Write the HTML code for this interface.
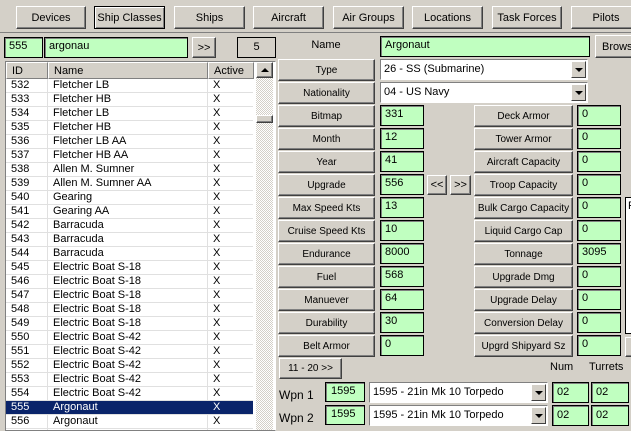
<!DOCTYPE html>
<html><head><meta charset="utf-8"><style>
*{box-sizing:border-box;margin:0;padding:0}
body{width:631px;height:427px;overflow:hidden;background:#d4d0c8;font-family:"Liberation Sans",sans-serif;font-size:11px;color:#000;position:relative}
.a{position:absolute}
.btn{position:absolute;background:#d4d0c8;border:1px solid;border-color:#fff #404040 #404040 #fff;box-shadow:inset -1px -1px 0 #808080;text-align:center;display:flex;align-items:center;justify-content:center;font-size:11px;white-space:nowrap}
.s{font-size:10px}
.sel{border:1px solid #000;box-shadow:inset 1px 1px 0 #fff,inset -1px -1px 0 #808080}
.f{position:absolute;background:#c0ffc0;border:1px solid #000;box-shadow:inset 1px 1px 0 #808080;padding:2px 0 0 4px;height:21px}
.w{position:absolute;background:#fff;border:1px solid #808080;border-right-color:#fff;border-bottom-color:#fff;padding:3px 0 0 3px;height:21px}
.dd{position:absolute;right:1px;top:1px;width:15px;height:17px;background:#d4d0c8;border:1px solid;border-color:#fff #404040 #404040 #fff}
.dd:after{content:"";position:absolute;left:3px;top:6px;border-left:4px solid transparent;border-right:4px solid transparent;border-top:4px solid #000}
#list{position:absolute;left:5px;top:61px;width:271px;height:370px;background:#fff;border:1px solid #808080;border-right-color:#fff;overflow:hidden}
.hd{position:absolute;top:0;height:17px;background:#d4d0c8;border:1px solid;border-color:#fff #808080 #808080 #fff;padding:2px 0 0 5px}
.r{position:absolute;left:0;width:247px;height:14px;border-bottom:1px solid #e0e0e0}
.r span{position:absolute;top:0}
.r span:nth-child(1){left:5px}.r span:nth-child(2){left:47px}.r span:nth-child(3){left:207px}
.vl{position:absolute;top:17px;bottom:0;width:1px;background:#e0e0e0}
</style></head><body>
<div class="a" style="left:0;top:32px;width:631px;height:1px;background:#808080"></div>
<div class="btn" style="left:16px;top:6px;width:70px;height:23px">Devices</div>
<div class="btn sel" style="left:94px;top:6px;width:71px;height:23px">Ship Classes</div>
<div class="btn" style="left:174px;top:6px;width:71px;height:23px">Ships</div>
<div class="btn" style="left:253px;top:6px;width:71px;height:23px">Aircraft</div>
<div class="btn" style="left:333px;top:6px;width:71px;height:23px">Air Groups</div>
<div class="btn" style="left:412px;top:6px;width:71px;height:23px">Locations</div>
<div class="btn" style="left:492px;top:6px;width:70px;height:23px">Task Forces</div>
<div class="btn" style="left:571px;top:6px;width:70px;height:23px">Pilots</div>

<div class="f" style="left:4px;top:37px;width:39px">555</div>
<div class="f" style="left:44px;top:37px;width:144px">argonau</div>
<div class="btn" style="left:192px;top:37px;width:24px;height:21px">&gt;&gt;</div>
<div class="a" style="left:237px;top:37px;width:39px;height:21px;border:1px solid #000;text-align:center;padding-top:3px">5</div>

<div id="list">
<div class="hd" style="left:0;width:42px">ID</div>
<div class="hd" style="left:42px;width:160px">Name</div>
<div class="hd" style="left:202px;width:46px">Active</div>
<div class="a" style="left:250px;top:0;width:17px;height:370px;background:repeating-conic-gradient(#fff 0 25%,#d4d0c8 0 50%) 0 0/2px 2px"></div>
<div class="btn" style="left:250px;top:0;width:17px;height:16px"><div style="border-left:4px solid transparent;border-right:4px solid transparent;border-bottom:4px solid #000"></div></div>
<div class="btn" style="left:250px;top:53px;width:17px;height:8px"></div>
<div class="vl" style="left:41px"></div><div class="vl" style="left:201px"></div>
<div class="r" style="top:17px"><span>532</span><span>Fletcher LB</span><span>X</span></div>
<div class="r" style="top:31px"><span>533</span><span>Fletcher HB</span><span>X</span></div>
<div class="r" style="top:45px"><span>534</span><span>Fletcher LB</span><span>X</span></div>
<div class="r" style="top:59px"><span>535</span><span>Fletcher HB</span><span>X</span></div>
<div class="r" style="top:73px"><span>536</span><span>Fletcher LB AA</span><span>X</span></div>
<div class="r" style="top:87px"><span>537</span><span>Fletcher HB AA</span><span>X</span></div>
<div class="r" style="top:101px"><span>538</span><span>Allen M. Sumner</span><span>X</span></div>
<div class="r" style="top:115px"><span>539</span><span>Allen M. Sumner AA</span><span>X</span></div>
<div class="r" style="top:129px"><span>540</span><span>Gearing</span><span>X</span></div>
<div class="r" style="top:143px"><span>541</span><span>Gearing AA</span><span>X</span></div>
<div class="r" style="top:157px"><span>542</span><span>Barracuda</span><span>X</span></div>
<div class="r" style="top:171px"><span>543</span><span>Barracuda</span><span>X</span></div>
<div class="r" style="top:185px"><span>544</span><span>Barracuda</span><span>X</span></div>
<div class="r" style="top:199px"><span>545</span><span>Electric Boat S-18</span><span>X</span></div>
<div class="r" style="top:213px"><span>546</span><span>Electric Boat S-18</span><span>X</span></div>
<div class="r" style="top:227px"><span>547</span><span>Electric Boat S-18</span><span>X</span></div>
<div class="r" style="top:241px"><span>548</span><span>Electric Boat S-18</span><span>X</span></div>
<div class="r" style="top:255px"><span>549</span><span>Electric Boat S-18</span><span>X</span></div>
<div class="r" style="top:269px"><span>550</span><span>Electric Boat S-42</span><span>X</span></div>
<div class="r" style="top:283px"><span>551</span><span>Electric Boat S-42</span><span>X</span></div>
<div class="r" style="top:297px"><span>552</span><span>Electric Boat S-42</span><span>X</span></div>
<div class="r" style="top:311px"><span>553</span><span>Electric Boat S-42</span><span>X</span></div>
<div class="r" style="top:325px"><span>554</span><span>Electric Boat S-42</span><span>X</span></div>
<div class="r" style="top:339px;background:#0a246a;color:#fff"><span>555</span><span>Argonaut</span><span>X</span></div>
<div class="r" style="top:353px"><span>556</span><span>Argonaut</span><span>X</span></div>
</div>

<div class="a" style="left:278px;top:39px;width:96px;text-align:center">Name</div>
<div class="f" style="left:380px;top:36px;width:210px">Argonaut</div>
<div class="btn" style="left:595px;top:35px;width:50px;height:23px;justify-content:flex-start;padding-left:6px">Browse</div>
<div class="btn s" style="left:278px;top:59px;width:97px;height:22px">Type</div>
<div class="w" style="left:380px;top:59px;width:208px">26 - SS (Submarine)<div class="dd"></div></div>
<div class="btn s" style="left:278px;top:82px;width:97px;height:22px">Nationality</div>
<div class="w" style="left:380px;top:82px;width:208px">04 - US Navy<div class="dd"></div></div>

<div class="btn s" style="left:278px;top:105px;width:97px;height:22px">Bitmap</div><div class="f" style="left:380px;top:105px;width:44px">331</div>
<div class="btn s" style="left:278px;top:128px;width:97px;height:22px">Month</div><div class="f" style="left:380px;top:128px;width:44px">12</div>
<div class="btn s" style="left:278px;top:151px;width:97px;height:22px">Year</div><div class="f" style="left:380px;top:151px;width:44px">41</div>
<div class="btn s" style="left:278px;top:174px;width:97px;height:22px">Upgrade</div><div class="f" style="left:380px;top:174px;width:44px">556</div>
<div class="btn s" style="left:278px;top:197px;width:97px;height:22px">Max Speed Kts</div><div class="f" style="left:380px;top:197px;width:44px">13</div>
<div class="btn s" style="left:278px;top:220px;width:97px;height:22px">Cruise Speed Kts</div><div class="f" style="left:380px;top:220px;width:44px">10</div>
<div class="btn s" style="left:278px;top:243px;width:97px;height:22px">Endurance</div><div class="f" style="left:380px;top:243px;width:44px">8000</div>
<div class="btn s" style="left:278px;top:266px;width:97px;height:22px">Fuel</div><div class="f" style="left:380px;top:266px;width:44px">568</div>
<div class="btn s" style="left:278px;top:289px;width:97px;height:22px">Manuever</div><div class="f" style="left:380px;top:289px;width:44px">64</div>
<div class="btn s" style="left:278px;top:312px;width:97px;height:22px">Durability</div><div class="f" style="left:380px;top:312px;width:44px">30</div>
<div class="btn s" style="left:278px;top:335px;width:97px;height:22px">Belt Armor</div><div class="f" style="left:380px;top:335px;width:44px">0</div>

<div class="btn" style="left:427px;top:175px;width:20px;height:20px">&lt;&lt;</div>
<div class="btn" style="left:450px;top:175px;width:21px;height:20px">&gt;&gt;</div>

<div class="btn s" style="left:474px;top:105px;width:99px;height:22px">Deck Armor</div><div class="f" style="left:577px;top:105px;width:44px">0</div>
<div class="btn s" style="left:474px;top:128px;width:99px;height:22px">Tower Armor</div><div class="f" style="left:577px;top:128px;width:44px">0</div>
<div class="btn s" style="left:474px;top:151px;width:99px;height:22px">Aircraft Capacity</div><div class="f" style="left:577px;top:151px;width:44px">0</div>
<div class="btn s" style="left:474px;top:174px;width:99px;height:22px">Troop Capacity</div><div class="f" style="left:577px;top:174px;width:44px">0</div>
<div class="btn s" style="left:474px;top:197px;width:99px;height:22px">Bulk Cargo Capacity</div><div class="f" style="left:577px;top:197px;width:44px">0</div>
<div class="btn s" style="left:474px;top:220px;width:99px;height:22px">Liquid Cargo Cap</div><div class="f" style="left:577px;top:220px;width:44px">0</div>
<div class="btn s" style="left:474px;top:243px;width:99px;height:22px">Tonnage</div><div class="f" style="left:577px;top:243px;width:44px">3095</div>
<div class="btn s" style="left:474px;top:266px;width:99px;height:22px">Upgrade Dmg</div><div class="f" style="left:577px;top:266px;width:44px">0</div>
<div class="btn s" style="left:474px;top:289px;width:99px;height:22px">Upgrade Delay</div><div class="f" style="left:577px;top:289px;width:44px">0</div>
<div class="btn s" style="left:474px;top:312px;width:99px;height:22px">Conversion Delay</div><div class="f" style="left:577px;top:312px;width:44px">0</div>
<div class="btn s" style="left:474px;top:335px;width:99px;height:22px">Upgrd Shipyard Sz</div><div class="f" style="left:577px;top:335px;width:44px">0</div>

<div class="a" style="left:625px;top:197px;width:10px;height:137px;background:#fff;border:1px solid #000;padding:2px 0 0 2px">F</div>
<div class="btn" style="left:625px;top:337px;width:10px;height:20px"></div>

<div class="btn s" style="left:279px;top:358px;width:63px;height:21px">11 - 20 &gt;&gt;</div>
<div class="a" style="left:550px;top:361px">Num</div>
<div class="a" style="left:589px;top:361px">Turrets</div>

<div class="a" style="left:279px;top:388px;font-size:12px">Wpn 1</div>
<div class="f" style="left:325px;top:382px;width:40px;height:20px;padding-left:5px">1595</div>
<div class="w" style="left:369px;top:382px;width:179px">1595 - 21in Mk 10 Torpedo<div class="dd"></div></div>
<div class="f" style="left:552px;top:382px;width:37px;padding-top:3px">02</div>
<div class="f" style="left:591px;top:382px;width:38px;padding-top:3px">02</div>

<div class="a" style="left:279px;top:411px;font-size:12px">Wpn 2</div>
<div class="f" style="left:325px;top:405px;width:40px;height:20px;padding-left:5px">1595</div>
<div class="w" style="left:369px;top:405px;width:179px">1595 - 21in Mk 10 Torpedo<div class="dd"></div></div>
<div class="f" style="left:552px;top:405px;width:37px;padding-top:3px">02</div>
<div class="f" style="left:591px;top:405px;width:38px;padding-top:3px">02</div>
</body></html>
